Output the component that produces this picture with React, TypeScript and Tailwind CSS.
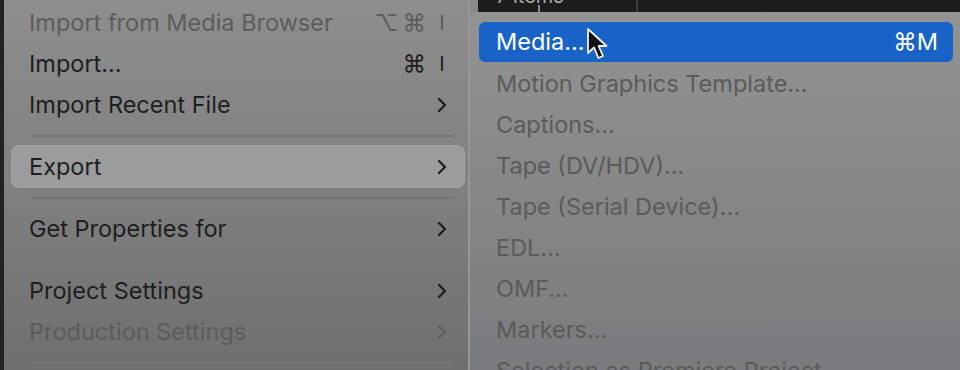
import React from 'react';

type Item = {
  label: string;
  disabled?: boolean;
  keys?: string;
  letter?: string;
  sub?: boolean;
  active?: boolean;
  sep?: boolean;
};

const leftItems: Item[] = [
  { label: 'Import from Media Browser', disabled: true, keys: '⌥⌘', letter: 'I' },
  { label: 'Import...', keys: '⌘', letter: 'I' },
  { label: 'Import Recent File', sub: true },
  { label: '', sep: true },
  { label: 'Export', sub: true, active: true },
  { label: '', sep: true },
  { label: 'Get Properties for', sub: true },
  { label: '', sep: true },
  { label: 'Project Settings', sub: true },
  { label: 'Production Settings', sub: true, disabled: true },
  { label: '', sep: true },
];

const exportItems = [
  'Motion Graphics Template...',
  'Captions...',
  'Tape (DV/HDV)...',
  'Tape (Serial Device)...',
  'EDL...',
  'OMF...',
  'Markers...',
  'Selection as Premiere Project',
];

function Chevron({ dim }: { dim?: boolean }) {
  return (
    <svg width="12" height="16" viewBox="0 0 12 16" className="block">
      <polyline
        points="3,2 9,8 3,14"
        fill="none"
        stroke={dim ? '#5e5e5e' : '#1c1c1c'}
        strokeWidth="2.2"
        strokeLinecap="round"
        strokeLinejoin="round"
      />
    </svg>
  );
}

function Cursor() {
  return (
    <svg width="26" height="34" viewBox="0 0 26 34" className="absolute left-[107px] top-[5px]">
      <path
        d="M2 2 L2 26 L8 20.5 L12.5 31 L17 29 L12.6 19 L20.5 19 Z"
        fill="#111"
        stroke="#f2f2f2"
        strokeWidth="1.8"
        strokeLinejoin="round"
      />
    </svg>
  );
}

function LeftRow({ item }: { item: Item }) {
  if (item.sep) {
    return (
      <div className="h-[21px] flex items-center pl-[28px] pr-[14px]">
        <div className="w-full h-[2px] bg-[#757575]" />
      </div>
    );
  }
  const color = item.disabled ? 'text-[#5c5c5c]' : 'text-[#1e1e1e]';
  return (
    <div className="h-[41px] pl-[8px] pr-[4px]">
      <div
        className={
          'h-full flex items-center pl-[17px] pr-[10px] rounded-[7px] ' +
          (item.active ? 'bg-[#9c9c9c] shadow-[0_0_0_1px_#a4a4a4]' : '')
        }
      >
        <span className={'flex-1 whitespace-nowrap ' + color}>{item.label}</span>
        {item.keys && (
          <span className={'flex items-center ' + color}>
            <span className="tracking-[4px]">{item.keys}</span>
            <span className="w-[24px] text-center text-[20px]">{item.letter}</span>
          </span>
        )}
        {item.sub && (
          <span className="w-[24px] flex justify-center">
            <Chevron dim={item.disabled} />
          </span>
        )}
      </div>
    </div>
  );
}

export default function App() {
  return (
    <div
      className="w-[960px] h-[370px] overflow-hidden flex bg-[#1b1b1b] text-[23.5px] leading-none"
      style={{ fontFamily: 'Inter, "Noto Sans", "Liberation Sans", sans-serif' }}
    >
      <div className="w-[4px] shrink-0 bg-[#222]" />
      <div className="w-[466px] shrink-0 pt-[2px] bg-gradient-to-b from-[#8e8e8e] via-[#808080] to-[#6f6f6f] border-r-[2px] border-[#979797]">
        {leftItems.map((it, i) => (
          <LeftRow key={i} item={it} />
        ))}
      </div>
      <div className="flex-1 flex flex-col bg-[#8b8b8b] overflow-hidden">
        <div className="h-[12px] shrink-0 ml-[8px] bg-[#1c1c1c] overflow-hidden relative">
          <div className="absolute left-[18px] -top-[14px] text-[20px] text-[#a8a8a8]">7 items</div>
          <div className="absolute left-[158px] top-0 w-[2px] h-full bg-[#3a3a3a]" />
          <div className="absolute left-[60px] top-[5px] w-[2px] h-[7px] bg-[#8a8a8a]" />
        </div>
        <div className="flex-1 shrink-0 -ml-[2px] rounded-tl-[12px] bg-gradient-to-b from-[#939393] via-[#858686] to-[#777a7e] pt-[10px] relative">
          <div className="h-[41px] pl-[11px] pr-[7px]">
            <div className="h-[40px] rounded-[6px] bg-[#1a63c6] flex items-center pl-[17px] pr-[15px] text-white relative">
              <span className="flex-1">Media...</span>
              <span>⌘M</span>
              <Cursor />
            </div>
          </div>
          {exportItems.map((t) => (
            <div key={t} className="h-[41px] flex items-center pl-[28px] text-[#5b5b5b] whitespace-nowrap">
              {t}
            </div>
          ))}
        </div>
      </div>
    </div>
  );
}
